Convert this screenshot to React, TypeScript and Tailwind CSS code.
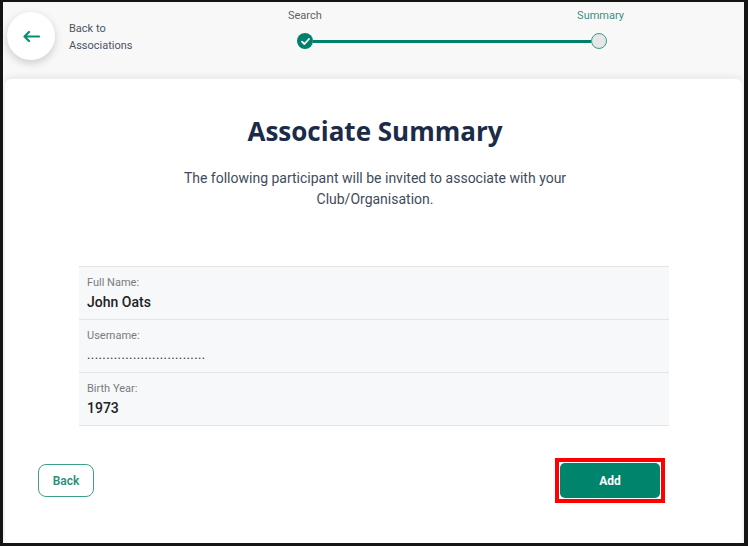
import React from "react";

export default function App() {
  const rows = [
    { label: "Full Name:", value: "John Oats" },
    { label: "Username:", value: "...............................", dots: true },
    { label: "Birth Year:", value: "1973" },
  ];
  return (
    <div
      className="w-[748px] h-[546px] overflow-hidden border-t-[2px] border-l-[3px] border-r-[4px] border-b-[3px] border-[#151515] bg-[#f8f8f8] flex flex-col"
      style={{ fontFamily: "Roboto, 'Liberation Sans', sans-serif" }}
    >
      {/* Header */}
      <div className="h-[77px] flex items-start shrink-0">
        <div className="ml-[4px] mt-[10px] w-[48px] h-[48px] rounded-full bg-white shadow-[0_3px_8px_rgba(0,0,0,0.18)] flex items-center justify-center">
          <svg width="17" height="11" viewBox="0 0 17 11" fill="none">
            <path d="M16 5.5H1.5M6 1L1.5 5.5L6 10" stroke="#0e8a73" strokeWidth="2.2" strokeLinecap="round" strokeLinejoin="round" />
          </svg>
        </div>
        <div className="ml-[14px] mt-[18px] w-[80px] text-[11px] leading-[17px] text-[#4b5563]">
          <div>Back to</div>
          <div>Associations</div>
        </div>
        <div className="ml-[139px] mt-[6px] w-[336px] flex flex-col">
          <div className="flex justify-between text-[11px] leading-[15px]">
            <span className="text-[#5f6368]">Search</span>
            <span className="text-[#3b8f86]">Summary</span>
          </div>
          <div className="mt-[10px] flex items-center ml-[9px] mr-[17px]">
            <div className="w-[16px] h-[16px] rounded-full bg-[#00806a] flex items-center justify-center shrink-0">
              <svg width="9" height="7" viewBox="0 0 9 7" fill="none">
                <path d="M1 3.6L3.4 6L8 1" stroke="white" strokeWidth="1.8" strokeLinecap="round" strokeLinejoin="round" />
              </svg>
            </div>
            <div className="flex-1 h-[3px] bg-[#00806a]" />
            <div className="w-[16px] h-[16px] rounded-full bg-[#e4e6e8] border-[1.5px] border-[#3d9a88] shrink-0" />
          </div>
        </div>
      </div>

      {/* Card */}
      <div className="flex-1 ml-[2px] mr-[2px] bg-white rounded-t-[6px] shadow-[0_-3px_6px_rgba(0,0,0,0.06)] flex flex-col">
        <h1
          className="mt-[37px] text-center text-[26px] leading-[30px] font-bold text-[#1b2b48] pl-[3px]"
          style={{ fontFamily: "'Open Sans', 'Liberation Sans', sans-serif" }}
        >
          Associate Summary
        </h1>
        <p className="mt-[22px] text-center text-[14px] leading-[21px] text-[#3f4b5b] pl-[3px]">
          The following participant will be invited to associate with your
          <br />
          Club/Organisation.
        </p>

        <div className="mt-[56px] ml-[74px] w-[590px] border-b border-[#e2e4e7] bg-[#f7f8fa]">
          {rows.map((r) => (
            <div key={r.label} className="border-t border-[#e2e4e7] px-[8px] pt-[8px] pb-[7px]">
              <div className="text-[11px] leading-[16px] text-[#777b80]">{r.label}</div>
              <div
                className={
                  r.dots
                    ? "mt-[1px] text-[13px] leading-[20px] text-[#333] tracking-[0.4px]"
                    : "mt-[1px] text-[14px] leading-[20px] font-medium text-[#222]"
                }
              >
                {r.value}
              </div>
            </div>
          ))}
        </div>

        <div className="mt-[32px] flex items-start justify-between ml-[33px] mr-[77px]">
          <button className="mt-[6px] w-[56px] h-[33px] rounded-[8px] border-[1.5px] border-[#3a9f8c] text-[#2a8f7c] text-[12px] font-semibold bg-white">
            Back
          </button>
          <div className="border-[4px] border-[#ff0000] p-[1px] bg-white">
            <button className="w-[100px] h-[35px] rounded-[5px] bg-[#00846c] text-white text-[12px] font-bold">
              Add
            </button>
          </div>
        </div>
      </div>
    </div>
  );
}
